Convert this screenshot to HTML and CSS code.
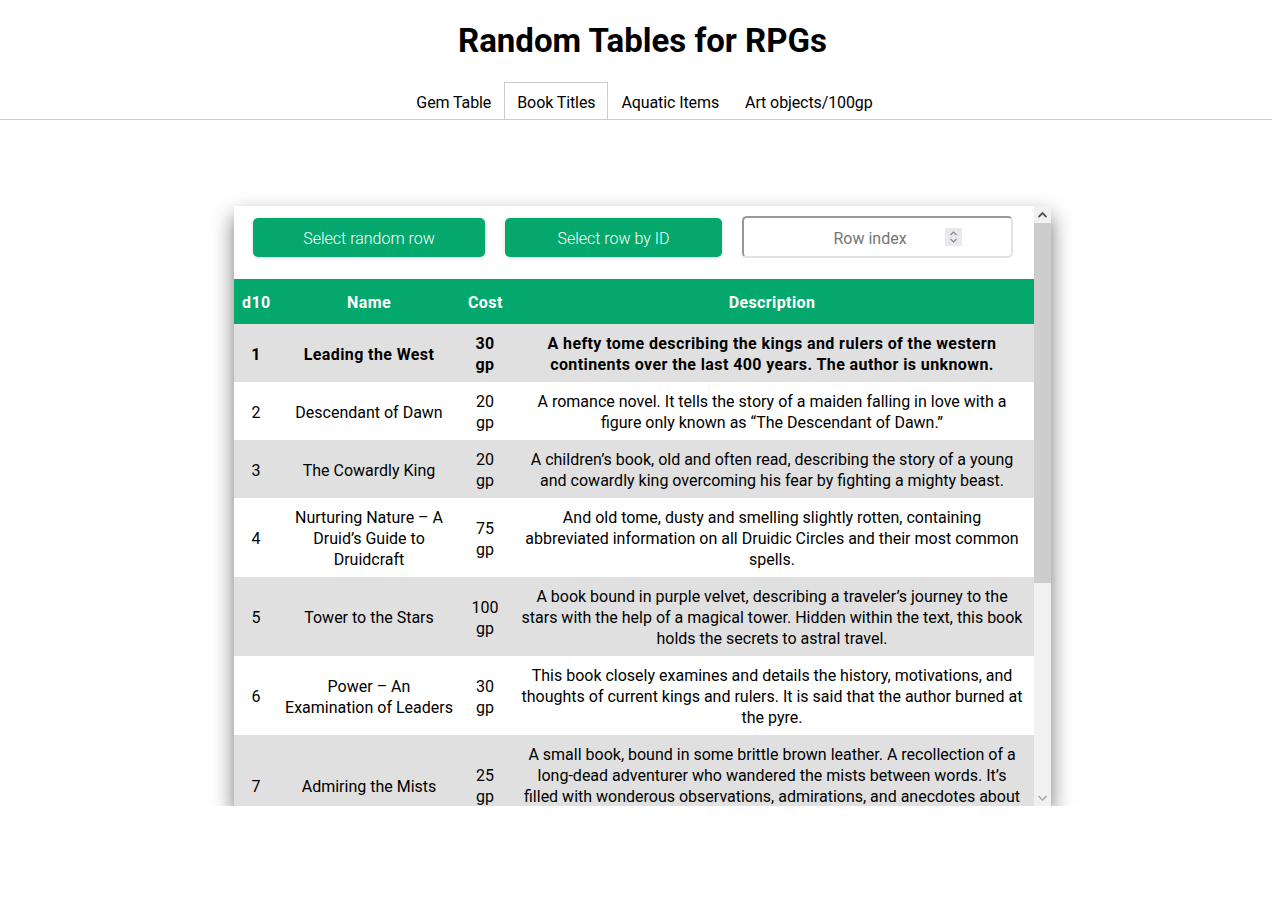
FILE: index.html
```html
<!DOCTYPE html>
<html lang="en">
<head>
<meta charset="utf-8">
<title>Random Tables for RPGs</title>
<link rel="stylesheet" href="styles.css">
</head>
<body>
<header class="site-header">
  <h1 class="site-title">Random Tables for RPGs</h1>
</header>
<nav class="tabbar">
  <ul class="tabs">
    <li class="tab">Gem Table</li>
    <li class="tab tab-active">Book Titles</li>
    <li class="tab">Aquatic Items</li>
    <li class="tab">Art objects/100gp</li>
  </ul>
</nav>
<main class="main">
  <section class="card">
    <div class="card-body">
      <div class="toolbar">
        <button class="btn btn-random">Select random row</button>
        <button class="btn btn-id">Select row by ID</button>
        <div class="row-input">
          <input class="row-input-field" type="text" placeholder="Row index">
          <span class="spinner">
            <svg width="9" height="14" viewBox="0 0 9 14"><path d="M1.5 5 L4.5 2 L7.5 5" fill="none" stroke="#8a8a8a" stroke-width="1.2"/><path d="M1.5 9 L4.5 12 L7.5 9" fill="none" stroke="#8a8a8a" stroke-width="1.2"/></svg>
          </span>
        </div>
      </div>
      <table class="rtable">
        <colgroup>
          <col class="c-die"><col class="c-name"><col class="c-cost"><col class="c-desc">
        </colgroup>
        <thead>
          <tr><th>d10</th><th>Name</th><th>Cost</th><th>Description</th></tr>
        </thead>
        <tbody>
          <tr class="row-selected"><td>1</td><td class="name">Leading the West</td><td>30 gp</td><td class="desc">A hefty tome describing the kings and rulers of the western continents over the last 400 years. The author is unknown.</td></tr>
          <tr><td>2</td><td class="name">Descendant of Dawn</td><td>20 gp</td><td class="desc">A romance novel. It tells the story of a maiden falling in love with a figure only known as “The Descendant of Dawn.”</td></tr>
          <tr><td>3</td><td class="name">The Cowardly King</td><td>20 gp</td><td class="desc">A children’s book, old and often read, describing the story of a young and cowardly king overcoming his fear by fighting a mighty beast.</td></tr>
          <tr><td>4</td><td class="name">Nurturing Nature – A Druid’s Guide to Druidcraft</td><td>75 gp</td><td class="desc">And old tome, dusty and smelling slightly rotten, containing abbreviated information on all Druidic Circles and their most common spells.</td></tr>
          <tr><td>5</td><td class="name">Tower to the Stars</td><td>100 gp</td><td class="desc">A book bound in purple velvet, describing a traveler’s journey to the stars with the help of a magical tower. Hidden within the text, this book holds the secrets to astral travel.</td></tr>
          <tr><td>6</td><td class="name">Power – An Examination of Leaders</td><td>30 gp</td><td class="desc">This book closely examines and details the history, motivations, and thoughts of current kings and rulers. It is said that the author burned at the pyre.</td></tr>
          <tr><td>7</td><td class="name">Admiring the Mists</td><td>25 gp</td><td class="desc">A small book, bound in some brittle brown leather. A recollection of a long-dead adventurer who wandered the mists between words. It’s filled with wonderous observations, admirations, and anecdotes about the creatures found there.</td></tr>
        </tbody>
      </table>
    </div>
    <div class="scrollbar">
      <span class="sb-btn">
        <svg width="9" height="6" viewBox="0 0 9 6"><path d="M0.5 5 L4.5 1 L8.5 5" fill="none" stroke="#505050" stroke-width="1.8"/></svg>
      </span>
      <span class="sb-track"><span class="sb-thumb"></span></span>
      <span class="sb-btn">
        <svg width="9" height="6" viewBox="0 0 9 6"><path d="M0.5 1 L4.5 5 L8.5 1" fill="none" stroke="#a3a3a3" stroke-width="1.4"/></svg>
      </span>
    </div>
  </section>
</main>
</body>
</html>
```
FILE: styles.css
```css
* { box-sizing: border-box; }

body {
  margin: 0;
  font-family: Roboto, "Liberation Sans", sans-serif;
  font-size: 16px;
  color: #000;
  background: #fff;
}

.site-header {
  padding-left: 13px;
  text-align: center;
}

.site-title {
  margin: 21px 0 21px;
  font-size: 33px;
  line-height: 40px;
  font-weight: 700;
}

.tabbar {
  border-bottom: 1px solid #cccccc;
  padding-left: 13px;
}

.tabs {
  list-style: none;
  margin: 0;
  padding: 0 0 0 4px;
  display: flex;
  justify-content: center;
}

.tab {
  padding: 10px 12px 6px;
  line-height: 20px;
  border: 1px solid transparent;
  border-bottom: none;
  letter-spacing: -0.1px;
}

.tab-active {
  border-color: #cccccc;
  background: #fff;
}

.main {
  padding-left: 13px;
}

.card {
  display: flex;
  width: 817px;
  height: 600px;
  margin: 86px auto 0;
  background: #fff;
  overflow: hidden;
  box-shadow: 0 10px 20px rgba(0, 0, 0, 0.55);
}

.card-body {
  width: 800px;
  overflow: hidden;
}

.toolbar {
  display: flex;
  align-items: center;
  gap: 20px;
  padding: 10px 21px 21px 19px;
}

.btn {
  height: 39px;
  padding: 2px 0 0;
  border: none;
  border-radius: 5px;
  background: #05a86c;
  color: #fff;
  font-family: Roboto, "Liberation Sans", sans-serif;
  font-size: 16px;
  font-weight: 300;
  box-shadow: 0 1px 4px rgba(0, 0, 0, 0.15);
}

.btn-random { width: 232px; }
.btn-id { width: 217px; }

.row-input {
  width: 271px;
  height: 42px;
  display: flex;
  align-items: center;
  padding-right: 49px;
  border: 2px solid;
  border-color: #979797 #e2e2e2 #e2e2e2 #979797;
  border-radius: 5px;
}

.row-input-field {
  flex: 1;
  min-width: 0;
  border: none;
  outline: none;
  padding: 2px 0 0 51px;
  text-align: center;
  font-family: Roboto, "Liberation Sans", sans-serif;
  font-size: 16px;
  color: #000;
  background: transparent;
}

.row-input-field::placeholder { color: #757575; }

.spinner {
  width: 17px;
  height: 18px;
  background: #e9e9ed;
  display: flex;
  align-items: center;
  justify-content: center;
}

.rtable {
  width: 800px;
  table-layout: fixed;
  border-collapse: collapse;
  text-align: center;
}

.c-die { width: 44px; }
.c-name { width: 182px; }
.c-cost { width: 50px; }
.c-desc { width: 524px; }

.rtable th {
  background: #05a86c;
  color: #fff;
  font-weight: 700;
  padding: 13px 8px 11px;
  line-height: 21px;
  letter-spacing: 0.4px;
}

.rtable td {
  padding: 9px 8px 7px;
  line-height: 21px;
  vertical-align: middle;
}

.rtable td.name {
  padding-left: 4px;
  padding-right: 4px;
}

.rtable td.desc {
  padding-left: 10px;
  padding-right: 10px;
}

.rtable tbody tr:nth-child(odd) { background: #e0e0e0; }
.rtable tbody tr:nth-child(even) { background: #fff; }

.row-selected td {
  font-weight: 700;
  letter-spacing: 0.4px;
}

.scrollbar {
  width: 17px;
  display: flex;
  flex-direction: column;
  background: #f1f1f1;
}

.sb-btn {
  height: 17px;
  display: flex;
  align-items: center;
  justify-content: center;
}

.sb-track {
  flex: 1;
}

.sb-thumb {
  display: block;
  height: 360px;
  background: #cdcdcd;
}
```
